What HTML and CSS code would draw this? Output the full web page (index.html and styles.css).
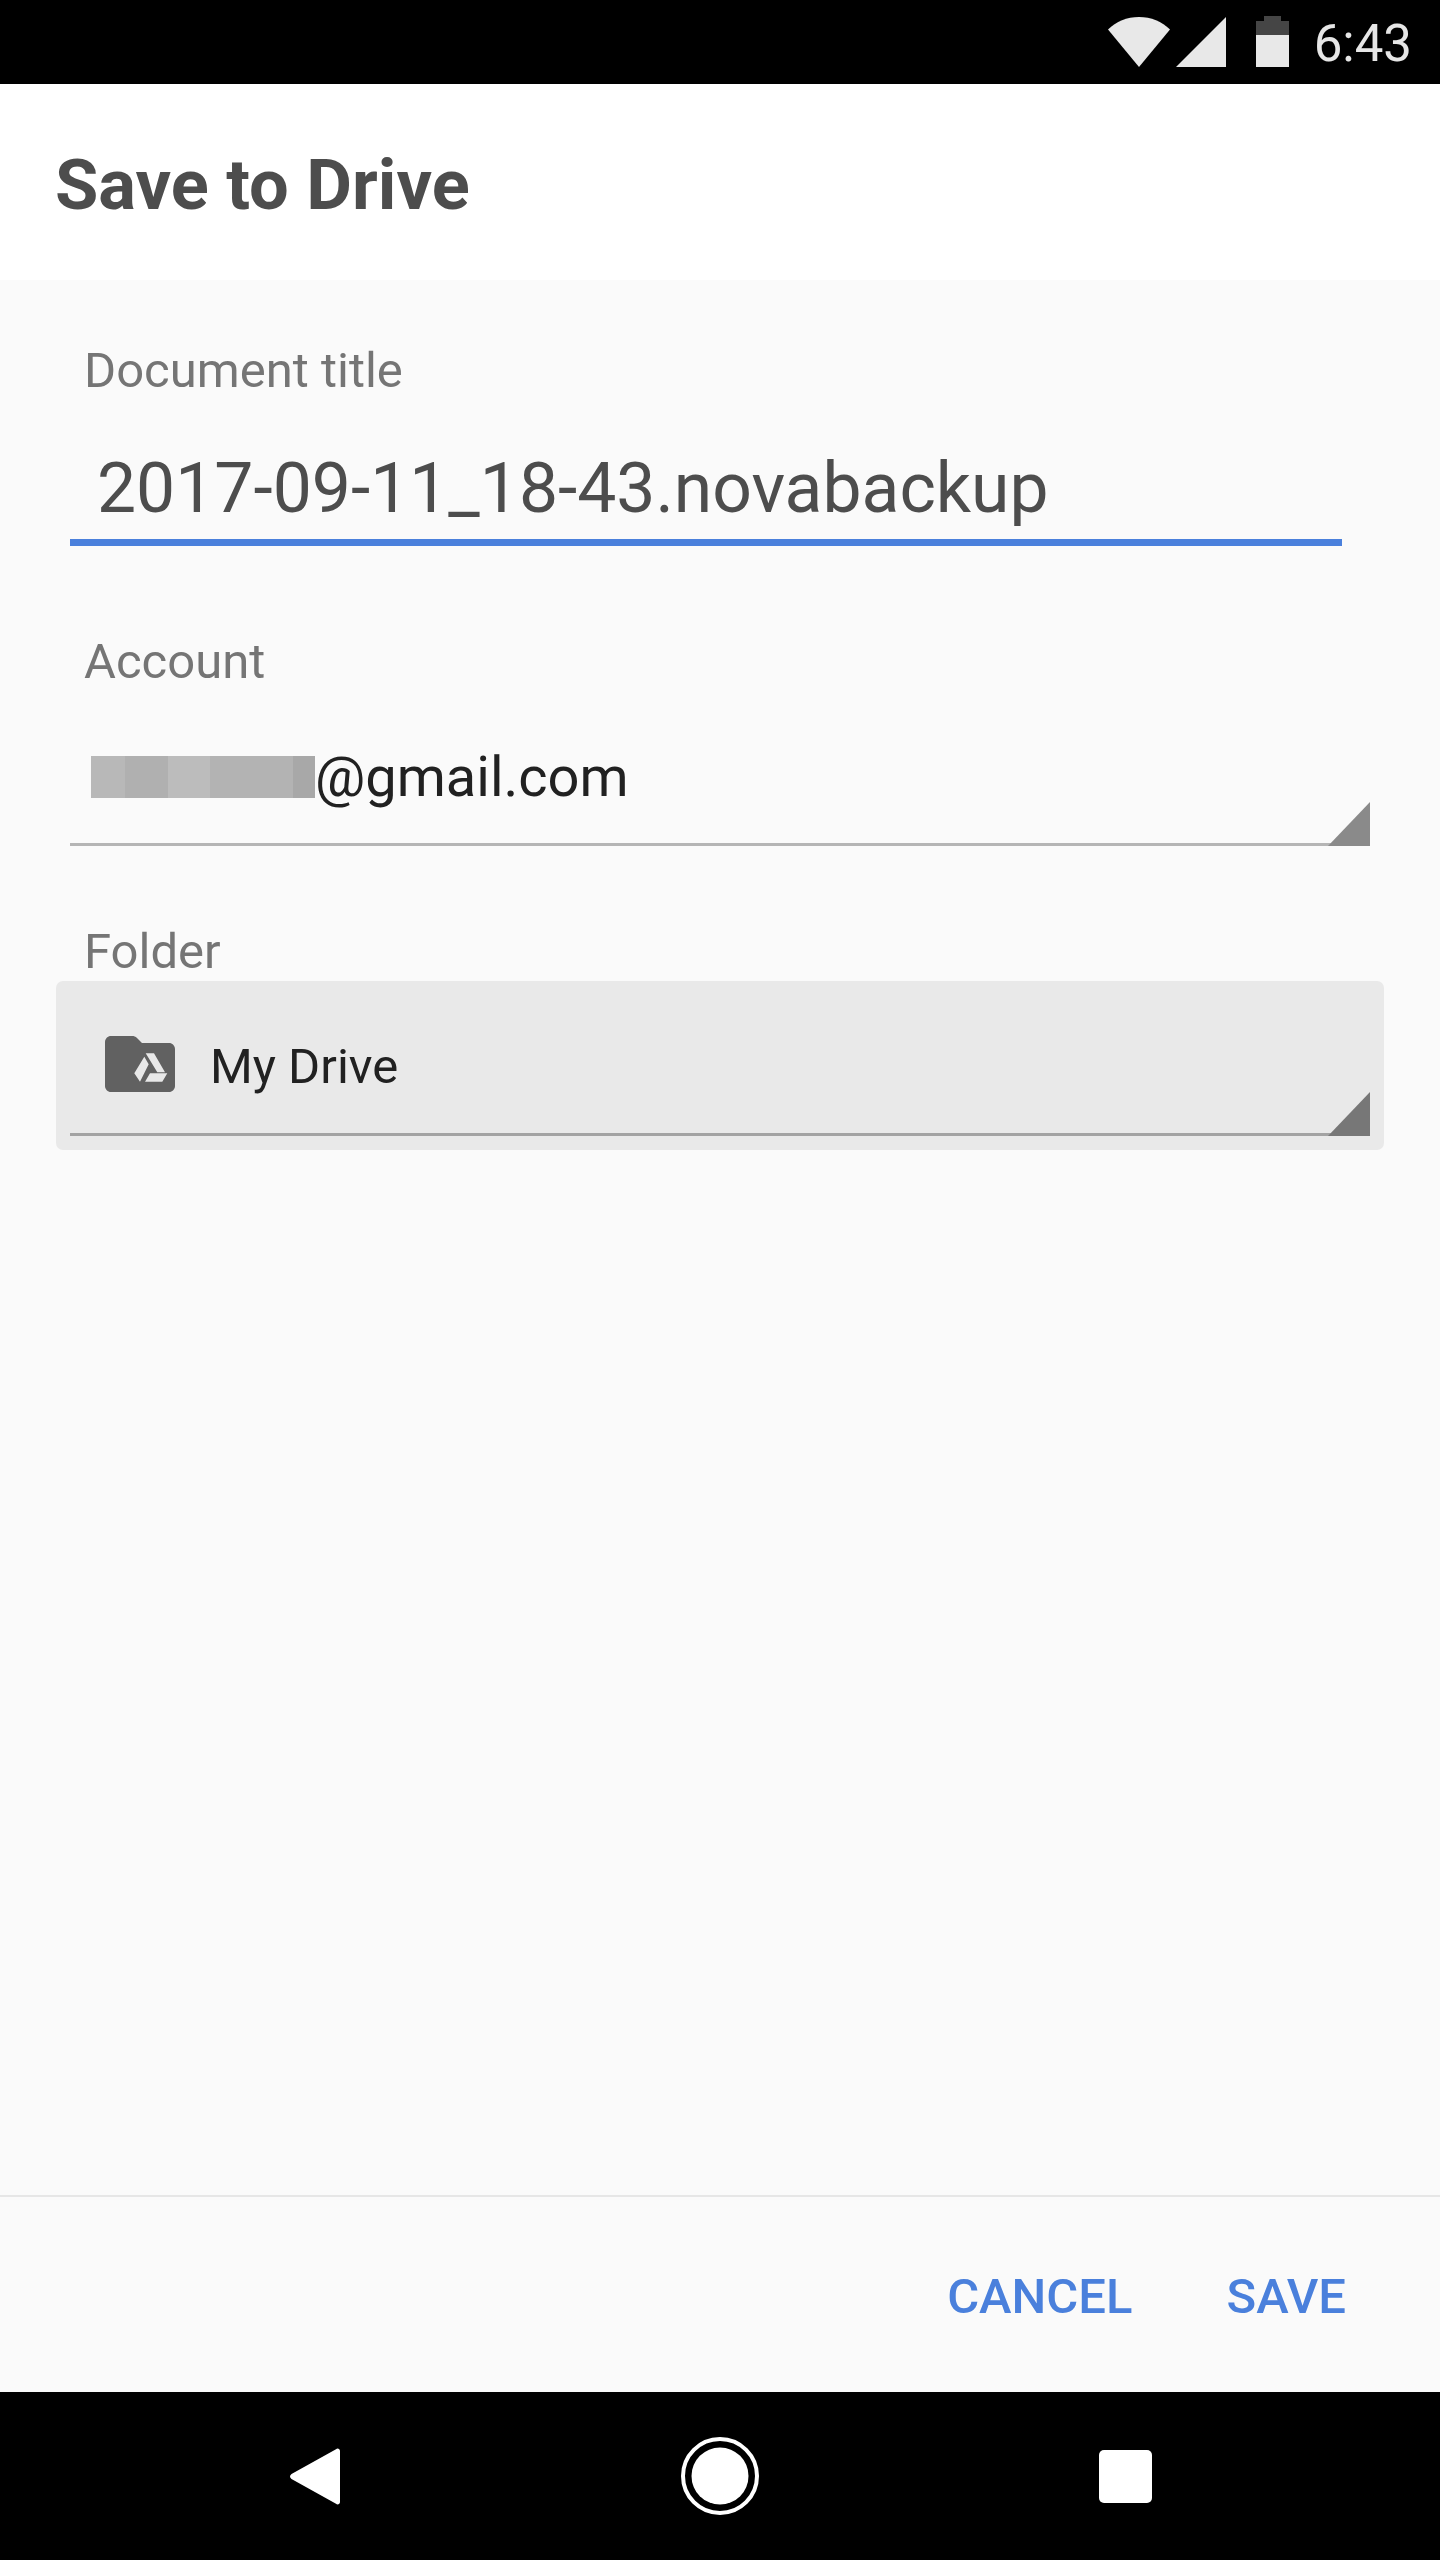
FILE: index.html
```html
<!DOCTYPE html>
<html lang="en">
<head>
<meta charset="utf-8">
<title>Save to Drive</title>
<link rel="stylesheet" href="styles.css">
</head>
<body>
<div class="screen">
  <div class="status-bar">
    <svg class="icon-wifi" width="62" height="50" viewBox="0 0 62 50"><path d="M0 12.5C8 4.500 19 0 31 0s23 4.500 31 12.500L31 50z"/></svg>
    <svg class="icon-signal" width="50" height="50" viewBox="0 0 50 50"><path d="M50 0v50H0z"/></svg>
    <svg class="icon-battery" width="33" height="51" viewBox="0 0 33 51"><path class="battery-empty" d="M8 0h17v5h8v14H0V5h8z"/><path class="battery-full" d="M0 19h33v32H0z"/></svg>
    <span class="clock">6:43</span>
  </div>

  <header class="app-header">
    <h1 class="app-title">Save to Drive</h1>
  </header>

  <main class="form">
    <section class="field field-title">
      <div class="field-label">Document title</div>
      <div class="title-input">2017-09-11_18-43.novabackup</div>
    </section>

    <section class="field field-account">
      <div class="field-label">Account</div>
      <div class="select select-account">
        <div class="redacted">
          <span class="pix pix-a"></span><span class="pix pix-b"></span><span class="pix pix-c"></span><span class="pix pix-d"></span><span class="pix pix-e"></span>
        </div>
        <span class="account-text">@gmail.com</span>
        <span class="corner"></span>
      </div>
    </section>

    <section class="field field-folder">
      <div class="field-label">Folder</div>
      <div class="folder-box">
        <div class="select select-folder">
          <svg class="icon-folder" width="70" height="56" viewBox="0 0 70 56">
            <path class="folder-shape" d="M6 0h21c2 0 3.500.6 5 2l5 5h27c3.300 0 6 2.700 6 6v37c0 3.300-2.700 6-6 6H6c-3.300 0-6-2.700-6-6V6c0-3.300 2.700-6 6-6z"/>
            <path class="drive-shape" d="M40.700 17.300H49l11 19h-7.700zM39.300 20.700l4.400 7.600L35 45.700l-5.700-8.400zM45 37.300h17.300l-5 8.400H40z"/>
          </svg>
          <span class="folder-text">My Drive</span>
          <span class="corner corner-dark"></span>
        </div>
      </div>
    </section>
  </main>

  <footer class="actions">
    <span class="action">CANCEL</span>
    <span class="action">SAVE</span>
  </footer>

  <nav class="nav-bar">
    <svg width="50" height="57" viewBox="0 0 50 57"><path class="nav-shape" d="M46 1.200C47.500-.2 50 .8 50 3v51c0 2.200-2.500 3.200-4 1.800L1.500 31c-2-1.500-2-3.500 0-5z"/></svg>
    <svg width="78" height="78" viewBox="0 0 78 78"><circle class="nav-ring" cx="39" cy="39" r="37"/><circle class="nav-shape" cx="39" cy="39" r="28.500"/></svg>
    <div class="nav-square"></div>
  </nav>
</div>
</body>
</html>
```

FILE: styles.css
```css
* {
  box-sizing: border-box;
}

html,
body {
  margin: 0;
  padding: 0;
}

body {
  background: #000;
  font-family: Roboto, "Liberation Sans", sans-serif;
}

.screen {
  width: 1440px;
  height: 2560px;
  display: flex;
  flex-direction: column;
  background: #fafafa;
  overflow: hidden;
}

/* Status bar */
.status-bar {
  height: 84px;
  flex: none;
  background: #000;
  display: flex;
  justify-content: flex-end;
  align-items: flex-start;
  padding: 16px 28px 0 0;
}

.status-bar svg {
  fill: #e8e8e8;
  display: block;
}

.icon-wifi {
  margin-top: 1px;
}

.icon-signal {
  margin: 1px 0 0 6px;
}

.icon-battery {
  margin-left: 30px;
}

.status-bar .battery-empty {
  fill: #454545;
}

.clock {
  margin: 0 0 0 25px;
  font-size: 51px;
  line-height: 56px;
  color: #e6e6e6;
}

/* Header */
.app-header {
  height: 196px;
  flex: none;
  background: #fff;
  padding: 61px 0 0 55px;
}

.app-title {
  margin: 0;
  font-size: 70.4px;
  line-height: 80px;
  font-weight: 700;
  color: #4d4d4d;
}

/* Form */
.form {
  flex: 1;
  padding: 65px 0 0 56px;
}

.field-label {
  margin-left: 28px;
  font-size: 49px;
  line-height: 52px;
  color: #757575;
}

.title-input {
  margin: 51px 98px 0 14px;
  padding: 0 0 11px 27px;
  border-bottom: 7px solid #4a80dc;
  font-size: 69.6px;
  line-height: 80px;
  color: #4d4d4d;
}

.field-account {
  margin-top: 90px;
}

.select {
  position: relative;
  display: flex;
  margin-left: 14px;
  width: 1300px;
  border-bottom: 3px solid #b5b5b5;
}

.select-account {
  margin-top: 57px;
  padding: 0 0 35px 21px;
  height: 101px;
}

.redacted {
  display: flex;
  height: 42px;
  margin-top: 11px;
}

.pix {
  display: block;
  height: 100%;
}

.pix-a {
  width: 34px;
  background: #b8b8b8;
}

.pix-b {
  width: 43px;
  background: #b0b0b0;
}

.pix-c {
  width: 42px;
  background: #bcbcbc;
}

.pix-d {
  width: 83px;
  background: #b3b3b3;
}

.pix-e {
  width: 22px;
  background: #a8a8a8;
}

.account-text {
  font-size: 56px;
  line-height: 64px;
  color: #212121;
}

.corner {
  position: absolute;
  right: 0;
  bottom: -3px;
  width: 42px;
  height: 44px;
  background: #8a8a8a;
  clip-path: polygon(100% 0, 100% 100%, 0 100%);
}

.corner-dark {
  background: #777;
}

.field-folder {
  margin-top: 80px;
}

.folder-box {
  width: 1328px;
  height: 169px;
  margin-top: 3px;
  padding-top: 55px;
  background: #e9e9e9;
  border-radius: 7px;
}

.select-folder {
  height: 100px;
  padding: 0 0 41px 35px;
  align-items: flex-start;
  border-bottom-color: #a3a3a3;
}

.icon-folder {
  display: block;
  flex: none;
}

.folder-shape {
  fill: #616161;
}

.drive-shape {
  fill: #e8e8e8;
}

.folder-text {
  margin-left: 35px;
  padding-top: 3px;
  font-size: 49px;
  line-height: 56px;
  color: #212121;
}

/* Footer actions */
.actions {
  height: 197px;
  flex: none;
  border-top: 2px solid #e6e6e6;
  display: flex;
  justify-content: flex-end;
  align-items: center;
  gap: 94px;
  padding: 4px 94px 0 0;
}

.action {
  font-size: 49px;
  line-height: 56px;
  font-weight: 500;
  color: #4a80dc;
}

/* Navigation */
.nav-bar {
  height: 168px;
  flex: none;
  background: #000;
  display: flex;
  justify-content: space-between;
  align-items: center;
  padding: 0 288px 0 290px;
}

.nav-bar svg {
  display: block;
}

.nav-shape {
  fill: #fff;
}

.nav-ring {
  fill: none;
  stroke: #fff;
  stroke-width: 4;
}

.nav-square {
  width: 53px;
  height: 53px;
  background: #fff;
  border-radius: 5px;
}
```
